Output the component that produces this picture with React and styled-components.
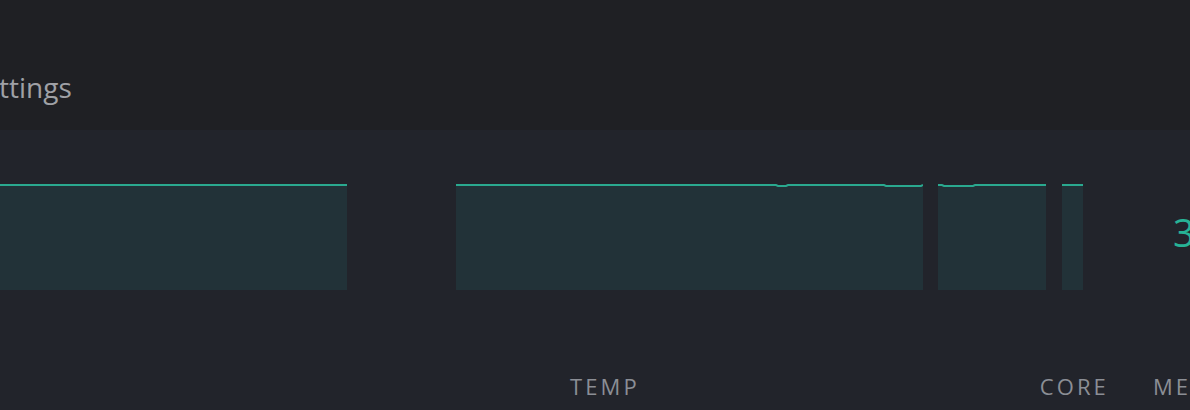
import React from 'react';
import styled, { createGlobalStyle } from 'styled-components';

const GlobalStyle = createGlobalStyle`
    html, body {
        margin: 0;
        padding: 0;
        background: #22242b;
        overflow: hidden;
    }
`

const charts = [
    { id: 'load', width: 400, offset: -53, dips: [] },
    { id: 'temp', width: 467, offset: 109, dips: [[320, 332], [428, 467]] },
    { id: 'core', width: 108, offset: 15, dips: [[4, 37]] },
    { id: 'mem', width: 21, offset: 16, dips: [] },
];

// top line of an area chart, with small 1px dips where the value drops
function linePath(width, dips) {
    let d = `M0 1`;
    dips.forEach(([a, b]) => {
        d += ` L${a} 1 L${a + 2} 2 L${b - 2} 2 L${b} 1`;
    });
    return d + ` L${width} 1`;
}

function AreaChart({ width, dips }) {
    const line = linePath(width, dips);
    return (
        <svg width={width} height={106} viewBox={`0 0 ${width} 106`}>
            <path d={`${line} L${width} 106 L0 106 Z`} fill="#223238" />
            <path d={line} fill="none" stroke="#2aa98f" strokeWidth="2" />
        </svg>
    );
}

function App() {
    return <>
        <GlobalStyle />
        <Page>
            <Header>
                <Header__title>Settings</Header__title>
            </Header>
            <Panel>
                <Panel__charts>
                    {charts.map(c => (
                        <Chart key={c.id} $offset={c.offset}>
                            <AreaChart width={c.width} dips={c.dips} />
                        </Chart>
                    ))}
                    <Panel__value>3</Panel__value>
                </Panel__charts>
                <Panel__labels>
                    <Label $offset={570}>TEMP</Label>
                    <Label $offset={400}>CORE</Label>
                    <Label $offset={44}>MEM</Label>
                </Panel__labels>
            </Panel>
        </Page>
    </>
}

const Page = styled.div`
    width: 1190px;
    height: 410px;
    overflow: hidden;
    font-family: "Open Sans", "Noto Sans", sans-serif;
`

const Header = styled.header`
    height: 130px;
    background: #1f2024;
    display: flex;
    align-items: flex-start;
`

const Header__title = styled.h1`
    margin: 69px 0 0 -32px;
    font-size: 28px;
    font-weight: 400;
    line-height: 37px;
    color: #9fa1a6;
    white-space: nowrap;
`

const Panel = styled.section`
    height: 280px;
    background: #22242b;
    display: flex;
    flex-direction: column;
`

const Panel__charts = styled.div`
    margin-top: 54px;
    height: 106px;
    display: flex;
    align-items: flex-start;
`

const Chart = styled.div`
    flex: none;
    margin-left: ${p => p.$offset}px;
    height: 106px;
    svg {
        display: block;
    }
`

const Panel__value = styled.div`
    margin: 22px 0 0 90px;
    font-size: 38px;
    line-height: 52px;
    color: #27b396;
    white-space: nowrap;
`

const Panel__labels = styled.div`
    margin-top: 81px;
    display: flex;
    white-space: nowrap;
`

const Label = styled.span`
    margin-left: ${p => p.$offset}px;
    font-size: 22px;
    letter-spacing: 3.1px;
    line-height: 30px;
    color: #8b8e95;
    flex: none;
`

export default App;
